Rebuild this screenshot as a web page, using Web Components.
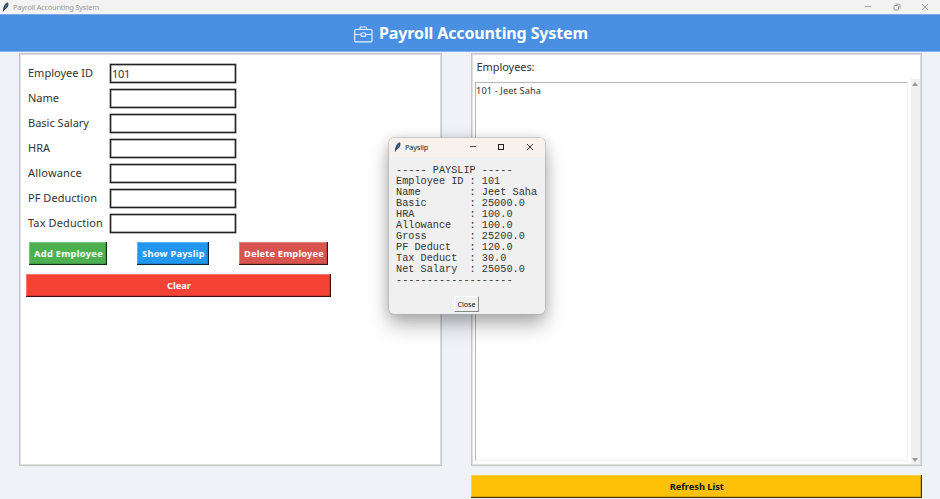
<!DOCTYPE html>
<html lang="en"><head><meta charset="utf-8"><title>Payroll Accounting System</title>
<style>
html,body{margin:0;height:100%;overflow:hidden}
body{font-family:"Noto Sans","Open Sans",sans-serif;color:#333}
</style></head><body>
<payroll-app></payroll-app>
<script>
const define=(name,html,init)=>{
  const t=document.createElement('template');t.innerHTML=html;
  customElements.define(name,class extends HTMLElement{
    connectedCallback(){
      if(this.shadowRoot)return;
      this.attachShadow({mode:'open'}).append(t.content.cloneNode(true));
      if(init)init.call(this,this.shadowRoot);
    }
  });
};
// Text run whose tracking is tuned so that it spans the width given in "w".
define('fit-text',`<style>:host{display:inline-block;white-space:pre;flex:none}</style><slot></slot>`,function(){
  const w=+this.getAttribute('w');
  const n=this.textContent.length;
  const now=this.getBoundingClientRect().width;
  if(w&&now)this.style.letterSpacing=((w-now)/n).toFixed(3)+'px';
});
define('feather-icon',`<style>:host{display:block;width:8px;height:10px;flex:none}svg{display:block}</style>
<svg width="8" height="10" viewBox="0 0 8 10"><path d="M1.2 9.6C.9 5.4 2.5 1.5 6 .3c1.1 2.3.2 5.6-3.2 7.3z" fill="#29435c"/><path d="M2.2 6.8C2.4 4.2 3.6 2.2 5.4 1.1c.2 1.8-.9 4.1-3.2 5.7z" fill="#5b8fc0"/><path d="M1.2 9.6C1.4 7 2.8 4 5.2 1.6" stroke="#17212c" stroke-width=".6" fill="none"/></svg>`);
define('title-bar',`<style>
:host{display:flex;align-items:center;box-sizing:border-box;height:14px;padding:0 11px 0 2px;background:#f3f3f3;color:#999;font-size:7.4px}
slot{display:block;margin-left:3px}
.c{margin-left:auto;display:flex;align-items:center;gap:var(--g,20.5px)}svg{display:block}
</style><feather-icon></feather-icon><slot></slot>
<div class="c"><svg width="8" height="8"><path d="M1 3.5h6" stroke="currentColor" stroke-width=".8"/></svg>
<svg class="mid" width="8" height="8" fill="none" stroke="currentColor"></svg>
<svg width="8" height="8"><path d="M1 1l6 6M7 1l-6 6" stroke="currentColor" stroke-width=".9"/></svg></div>`,function(r){
  r.querySelector('.mid').innerHTML=this.hasAttribute('restored')?'<rect x="1" y="2.500" width="4.500" height="4.500" rx="1"/><path d="M2.500 1.200h3.200q1.300 0 1.300 1.300v3.200"/>':'<rect x="1.500" y="1.500" width="5" height="5"/>';
});
define('app-header',`<style>:host{display:flex;box-sizing:border-box;height:38px;align-items:center;padding-left:354px;gap:6px;background:#4a90e2;color:#fff;font-weight:700;font-size:16px;line-height:22px;border-top:1px solid #78a9e2;border-bottom:1px solid #86b5ee}svg{display:block;margin-top:3px}fit-text{margin-top:2px}</style>
<svg width="19" height="17" fill="none" stroke="#e6f0fc" stroke-width="1.200"><rect x=".7" y="3.500" width="17.300" height="12.300" rx="1"/><path d="M6 3.500V2q0-1 1-1h4.500q1 0 1 1v1.500M.7 8.500h6M12 8.500h6"/><rect x="7" y="7" width="4.700" height="3.400" rx="1"/></svg><slot></slot>`);
define('form-field',`<style>:host{display:flex;align-items:center;height:20px;font-size:11px;line-height:16px}
.l{width:82px;flex:none;display:flex}.b{box-sizing:border-box;width:126px;height:19px;border:1px solid #222;box-shadow:inset 0 0 0 .5px #666,0 0 0 .5px #777;background:#fff;padding-left:1px;line-height:17px}</style>
<div class="l"><slot></slot></div><div class="b"><slot name="value"></slot></div>`);
define('relief-button',`<style>:host{display:flex;align-items:center;justify-content:center;box-sizing:border-box;height:23px;color:#fff;font-weight:700;font-size:9.300px;line-height:14px;padding:1px 0 0 1px;box-shadow:inset -1px -1px rgba(0,0,0,.65),inset -1.500px -1.500px rgba(0,0,0,.25),inset 1px 1px rgba(255,255,255,.25)}</style><slot></slot>`);
define('form-panel',`<style>:host{display:block;box-sizing:border-box;width:423px;height:413px;border:1px solid #c6c6c6;box-shadow:inset 0 0 0 1px #dedede;background:#fff;padding:9px 0 0 8px}
.f{display:grid;gap:5px}.r{display:flex;margin:9px 0 9px 1px}</style>
<div class="f">
<form-field><fit-text w="65">Employee ID</fit-text><fit-text slot="value" w="18">101</fit-text></form-field>
<form-field><fit-text w="31">Name</fit-text></form-field>
<form-field><fit-text w="61">Basic Salary</fit-text></form-field>
<form-field><fit-text w="22">HRA</fit-text></form-field>
<form-field><fit-text w="54">Allowance</fit-text></form-field>
<form-field><fit-text w="69">PF Deduction</fit-text></form-field>
<form-field><fit-text w="75">Tax Deduction</fit-text></form-field></div>
<div class="r">
<relief-button style="background-color:#4caf50;width:78px"><fit-text w="69">Add Employee</fit-text></relief-button>
<relief-button style="background-color:#2196f3;width:72px;margin-left:30px"><fit-text w="63">Show Payslip</fit-text></relief-button>
<relief-button style="background-color:#d9534f;width:89px;margin-left:30px"><fit-text w="80">Delete Employee</fit-text></relief-button></div>
<relief-button style="background-color:#f44336;width:305px;margin-left:-2px"><fit-text w="24">Clear</fit-text></relief-button>`);
define('scroll-rail',`<style>:host{display:flex;flex-direction:column;justify-content:space-between;align-items:center;width:9px;box-sizing:border-box;padding:3px 0 2px;background:#f0f0f0}svg{display:block}</style>
<svg width="6" height="4"><path d="M3 0l3 4H0z" fill="#999"/></svg><svg width="6" height="4"><path d="M0 0h6L3 4z" fill="#999"/></svg>`);
define('employee-list',`<style>:host{display:flex;flex-direction:column;box-sizing:border-box;width:451px;height:413px;border:1px solid #c6c6c6;box-shadow:inset 0 0 0 1px #dedede;background:#fff;padding:1px 1px 1px 3px}
.h{height:24px;box-sizing:border-box;padding:4px 0 0 2px;font-size:11px;line-height:16px}
.m{display:flex;justify-content:space-between;height:385px}
.b{box-sizing:border-box;width:433px;height:379px;margin-top:3px;border:1px solid;border-color:#b5b5b5 #f1f1f1 #f1f1f1 #b5b5b5;font-size:9.200px;line-height:14px;padding-top:1px;padding-left:.5px}</style>
<div class="h"><fit-text w="58">Employees:</fit-text></div><div class="m"><div class="b"><fit-text w="65">101 - Jeet Saha</fit-text></div><scroll-rail></scroll-rail></div>`);
define('payslip-dialog',`<style>:host{display:block;position:absolute;left:389px;top:138px;width:155.5px;height:176px;background:#f0f0f0;border-radius:5px;overflow:hidden;color:#333;box-shadow:0 0 0 .5px #aaa,0 11px 20px rgba(0,0,0,.29),0 1px 14px rgba(0,0,0,.15)}
title-bar{height:19px;background:#f9f1ec;color:#222;padding:0 11px 2px 5px;--g:20.500px;font-size:7.300px}
pre{margin:8px 0 0 7px;font:10.220px/11px "Liberation Mono",monospace;color:#333}
.c{box-sizing:border-box;margin:10px 0 0 65px;width:25px;height:16px;border:solid;border-width:1px 1.500px 1.500px 1px;border-color:#fff #888 #888 #fff;display:flex;align-items:center;justify-content:center;font-size:7.200px;line-height:12px;color:#111}</style>
<title-bar><fit-text w="23">Payslip</fit-text></title-bar>
<pre>----- PAYSLIP -----
Employee ID : 101
Name        : Jeet Saha
Basic       : 25000.0
HRA         : 100.0
Allowance   : 100.0
Gross       : 25200.0
PF Deduct   : 120.0
Tax Deduct  : 30.0
Net Salary  : 25050.0
-------------------</pre><div class="c"><fit-text w="18">Close</fit-text></div>`);
define('payroll-app',`<style>:host{display:block;position:relative;width:940px;height:499px;background:#eff3f8;overflow:hidden}
main{display:flex;gap:28px;padding:1px 0 0 19px;align-items:flex-start}.r{display:grid;gap:9px;margin-left:.5px}</style>
<title-bar restored><fit-text w="86">Payroll Accounting System</fit-text></title-bar>
<app-header><fit-text w="209">Payroll Accounting System</fit-text></app-header>
<main><form-panel></form-panel><div class="r"><employee-list></employee-list>
<relief-button style="background-color:#ffc107;color:#111;height:23px;width:451.500px"><fit-text w="54">Refresh List</fit-text></relief-button></div></main>
<payslip-dialog></payslip-dialog>`);
</script></body></html>
